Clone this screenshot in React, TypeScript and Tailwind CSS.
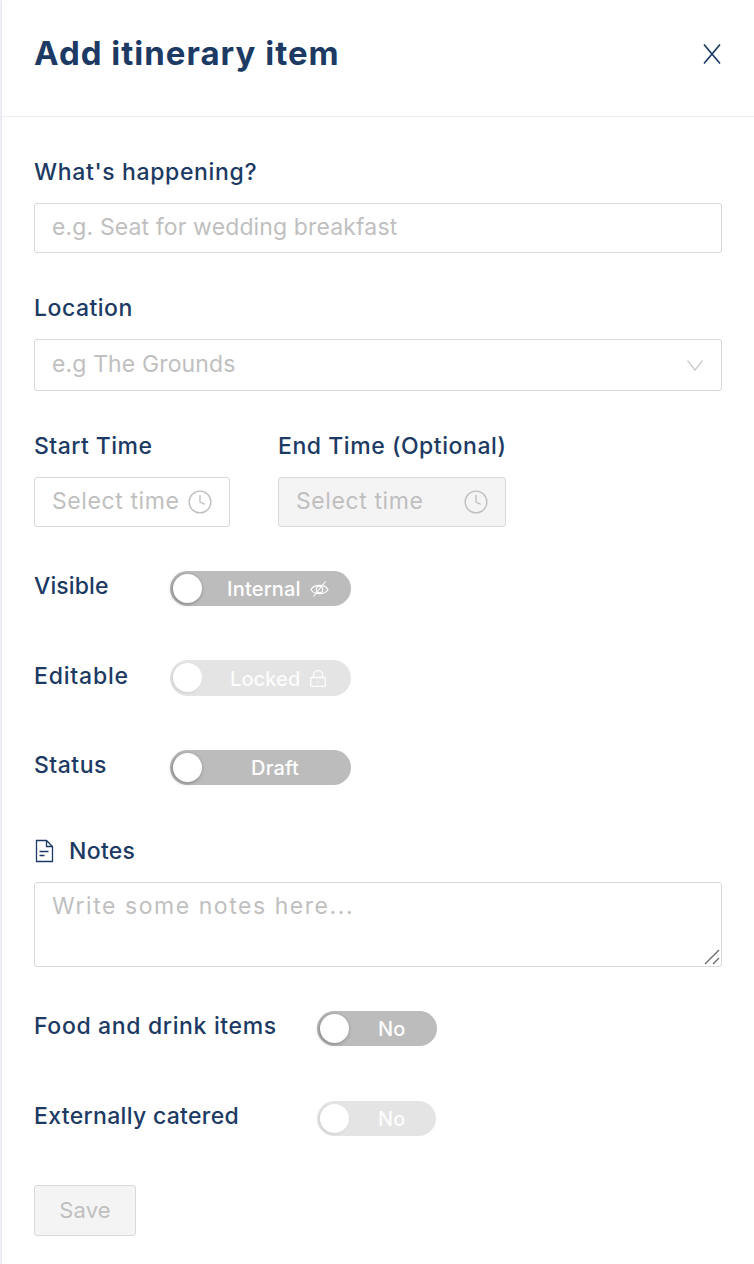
import { Clock } from "lucide-react";
import type { ReactNode } from "react";

const font = "font-['Inter','Noto_Sans',sans-serif]";

const Label = ({ children, className = "", tracking = "tracking-[0.65px]" }: { children: ReactNode; className?: string; tracking?: string }) => (
  <div className={`text-[23px] leading-[28px] font-medium text-[#1c3a63] ${tracking} ${className}`}>{children}</div>
);

interface ToggleProps {
  text: string;
  icon?: ReactNode;
  disabled?: boolean;
  className: string;
  textBox: string;
}

const Toggle = ({ text, icon, disabled = false, className, textBox }: ToggleProps) => (
  <div className={`relative flex items-center rounded-full ${className} ${disabled ? "bg-[#e4e4e4]" : "bg-[#bcbcbc]"}`}>
    <span className={`absolute left-[3px] top-[3px] h-[29px] w-[29px] rounded-full bg-white ${disabled ? "shadow-[-1px_1px_3px_rgba(0,0,0,0.1)]" : "shadow-[-1px_1px_4px_rgba(0,0,0,0.35)]"}`} />
    <span className={`flex items-center justify-center pt-[1px] text-[20px] font-medium text-white ${textBox} ${disabled ? "opacity-90" : ""}`}>
      {text}
      {icon}
    </span>
  </div>
);

const TimeField = ({ disabled = false, className }: { disabled?: boolean; className: string }) => (
  <div className={`flex h-[50px] items-center justify-between rounded-[3px] border border-[#d9d9d9] pl-[17px] ${disabled ? "bg-[#f4f4f4]" : "bg-white"} ${className}`}>
    <span className="pb-[2px] text-[23px] tracking-[0.6px] text-[#bfbfbf]">Select time</span>
    <Clock size={26} strokeWidth={1.25} className="text-[#bfbfbf]" />
  </div>
);

export default function App() {
  return (
    <div className={`${font} min-h-[1264px] w-[754px] bg-[#f2f2f8] pl-[2px]`}>
      <div className="min-h-[1264px] bg-white shadow-[0_2px_4px_rgba(0,0,0,0.08)]">
        <div className="flex h-[117px] items-center justify-between border-b border-[#eeeeee] pb-[8px] pl-[32px] pr-[32px]">
          <h1 className="text-[33px] font-bold tracking-[1px] text-[#1c3a63]">Add itinerary item</h1>
          <svg width="20" height="22" viewBox="0 0 20 22" fill="none" stroke="#1c3a63" strokeWidth="1.7">
            <path d="M2 1.5 18 20.5M18 1.5 2 20.5" />
          </svg>
        </div>

        <div className="pl-[32px] pr-[32px]">
          <Label className="mt-[41px]">What's happening?</Label>
          <input
            placeholder="e.g. Seat for wedding breakfast"
            className="mt-[17px] block h-[50px] w-full rounded-[3px] border border-[#d9d9d9] px-[17px] pb-[2px] text-[23px] tracking-[0.13px] outline-none placeholder:text-[#bfbfbf]"
          />

          <Label className="mt-[41px]" tracking="tracking-[0.5px]">Location</Label>
          <div className="mt-[17px] flex h-[52px] items-center justify-between rounded-[3px] border border-[#d9d9d9] pl-[17px] pr-[18px]">
            <span className="pb-[2px] text-[23px] tracking-[0.13px] text-[#bfbfbf]">e.g The Grounds</span>
            <svg width="16" height="11" viewBox="0 0 16 11" fill="none" stroke="#bfbfbf" strokeWidth="1.2">
              <path d="M0.5 0.5 8 10 15.5 0.5" />
            </svg>
          </div>

          <div className="mt-[41px] flex gap-[48px]">
            <div>
              <Label tracking="tracking-[0.45px]">Start Time</Label>
              <TimeField className="mt-[17px] w-[196px] pr-[16px]" />
            </div>
            <div>
              <Label tracking="tracking-[0.55px]">End Time (Optional)</Label>
              <TimeField disabled className="mt-[17px] w-[228px] pr-[16px]" />
            </div>
          </div>

          <div className="mt-[44px] flex items-center">
            <Label className="w-[136px] -translate-y-[3px]" tracking="tracking-[0.1px]">Visible</Label>
            <Toggle
              text="Internal"
              className="h-[35px] w-[181px]"
              textBox="ml-[57px] tracking-[0.2px]"
              icon={
                <svg width="19" height="18" viewBox="0 0 19 18" fill="none" stroke="white" strokeWidth="1.1" className="ml-[9px]">
                  <path d="M1 9.5C4 4 15 4 18 9.5 15 15 4 15 1 9.5Z" />
                  <circle cx="9.5" cy="9.5" r="3.2" />
                  <path d="M3.5 16.5 15.5 1.5" />
                </svg>
              }
            />
          </div>
          <div className="mt-[54px] flex items-center">
            <Label className="w-[136px] -translate-y-[2px]" tracking="tracking-[0.8px]">Editable</Label>
            <Toggle
              text="Locked"
              disabled
              className="h-[36px] w-[181px]"
              textBox="ml-[60px] tracking-[0.1px]"
              icon={
                <svg width="16" height="17" viewBox="0 0 16 17" fill="none" stroke="white" strokeWidth="1.3" className="ml-[10px]">
                  <path d="M3.5 7.5V4.5a4.5 3.8 0 0 1 9 0v3" />
                  <rect x="0.7" y="7.5" width="14.6" height="8.8" rx="0.8" />
                  <path d="M8 11v1.6" />
                </svg>
              }
            />
          </div>
          <div className="mt-[54px] flex items-center">
            <Label className="w-[136px] -translate-y-[3px]" tracking="tracking-[0.5px]">Status</Label>
            <Toggle text="Draft" className="h-[35px] w-[181px]" textBox="ml-[81px] tracking-[0.2px]" />
          </div>

          <div className="mt-[52px] flex items-center gap-[14px]">
            <svg width="21" height="24" viewBox="0 0 21 24" fill="none" stroke="#1c3a63" strokeWidth="1.3">
              <path d="M2.5 1.5h10l6 6v15h-16zM12.5 1.5v6h6M5.5 12.5h9M5.5 16.5h5" />
            </svg>
            <Label tracking="tracking-[0.3px]">Notes</Label>
          </div>
          <div className="relative mt-[17px]">
            <textarea
              placeholder="Write some notes here..."
              className="block h-[85px] w-full resize-none rounded-[3px] border border-[#d9d9d9] px-[17px] pb-[8px] pt-[6px] text-[23px] tracking-[1.55px] outline-none placeholder:text-[#bfbfbf]"
            />
            <svg width="16" height="16" viewBox="0 0 16 16" fill="none" stroke="#666666" strokeWidth="1.3" className="absolute bottom-[2px] right-[2px]">
              <path d="M1 15 15 1M9 15 15 9" />
            </svg>
          </div>

          <div className="mt-[44px] flex items-center">
            <Label className="w-[283px] -translate-y-[3px]">Food and drink items</Label>
            <Toggle text="No" className="h-[35px] w-[120px]" textBox="ml-[61px]" />
          </div>
          <div className="mt-[55px] flex items-center">
            <Label className="w-[283px] -translate-y-[3px]" tracking="tracking-[0.32px]">Externally catered</Label>
            <Toggle text="No" disabled className="h-[35px] w-[119px]" textBox="ml-[61px]" />
          </div>

          <button className="mt-[49px] block h-[51px] w-[102px] rounded-[3px] border border-[#d9d9d9] bg-[#f4f4f4] text-[22px] tracking-[0.2px] text-[#bfbfbf]">
            Save
          </button>
        </div>
      </div>
    </div>
  );
}
